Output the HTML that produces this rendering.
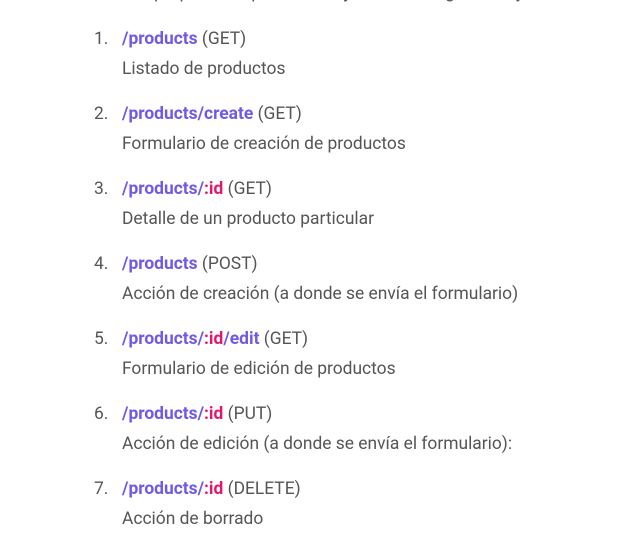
<!DOCTYPE html>
<html><head><meta charset="utf-8"><style>
html,body{margin:0;padding:0;background:#fff;width:621px;height:536px;overflow:hidden}
body{font-family:"Roboto","Liberation Sans",Arial,sans-serif;font-size:17.4px;color:#555;position:relative}
.top{position:absolute;left:122px;top:-22px;line-height:30px;white-space:nowrap}
.it{position:absolute;left:0;width:621px;line-height:30px}
.n{position:absolute;left:94px;top:0}
.l{position:absolute;left:122px;white-space:nowrap}
.l1{top:0}.l2{top:30px}
b{font-weight:bold;color:#6f5ae6}
b i{font-style:normal;color:#e3166f}
</style></head><body>
<div class="top">Las propuestas que se manejan son las siguientes y</div>
<div class="it" style="top:24px"><span class="n">1.</span><span class="l l1"><b>/products</b> (GET)</span><span class="l l2">Listado de productos</span></div>
<div class="it" style="top:99px"><span class="n">2.</span><span class="l l1"><b>/products/create</b> (GET)</span><span class="l l2">Formulario de creación de productos</span></div>
<div class="it" style="top:174px"><span class="n">3.</span><span class="l l1"><b>/products/<i>:id</i></b> (GET)</span><span class="l l2">Detalle de un producto particular</span></div>
<div class="it" style="top:249px"><span class="n">4.</span><span class="l l1"><b>/products</b> (POST)</span><span class="l l2">Acción de creación (a donde se envía el formulario)</span></div>
<div class="it" style="top:324px"><span class="n">5.</span><span class="l l1"><b>/products/<i>:id</i>/edit</b> (GET)</span><span class="l l2">Formulario de edición de productos</span></div>
<div class="it" style="top:399px"><span class="n">6.</span><span class="l l1"><b>/products/<i>:id</i></b> (PUT)</span><span class="l l2">Acción de edición (a donde se envía el formulario):</span></div>
<div class="it" style="top:474px"><span class="n">7.</span><span class="l l1"><b>/products/<i>:id</i></b> (DELETE)</span><span class="l l2">Acción de borrado</span></div>
</body></html>
